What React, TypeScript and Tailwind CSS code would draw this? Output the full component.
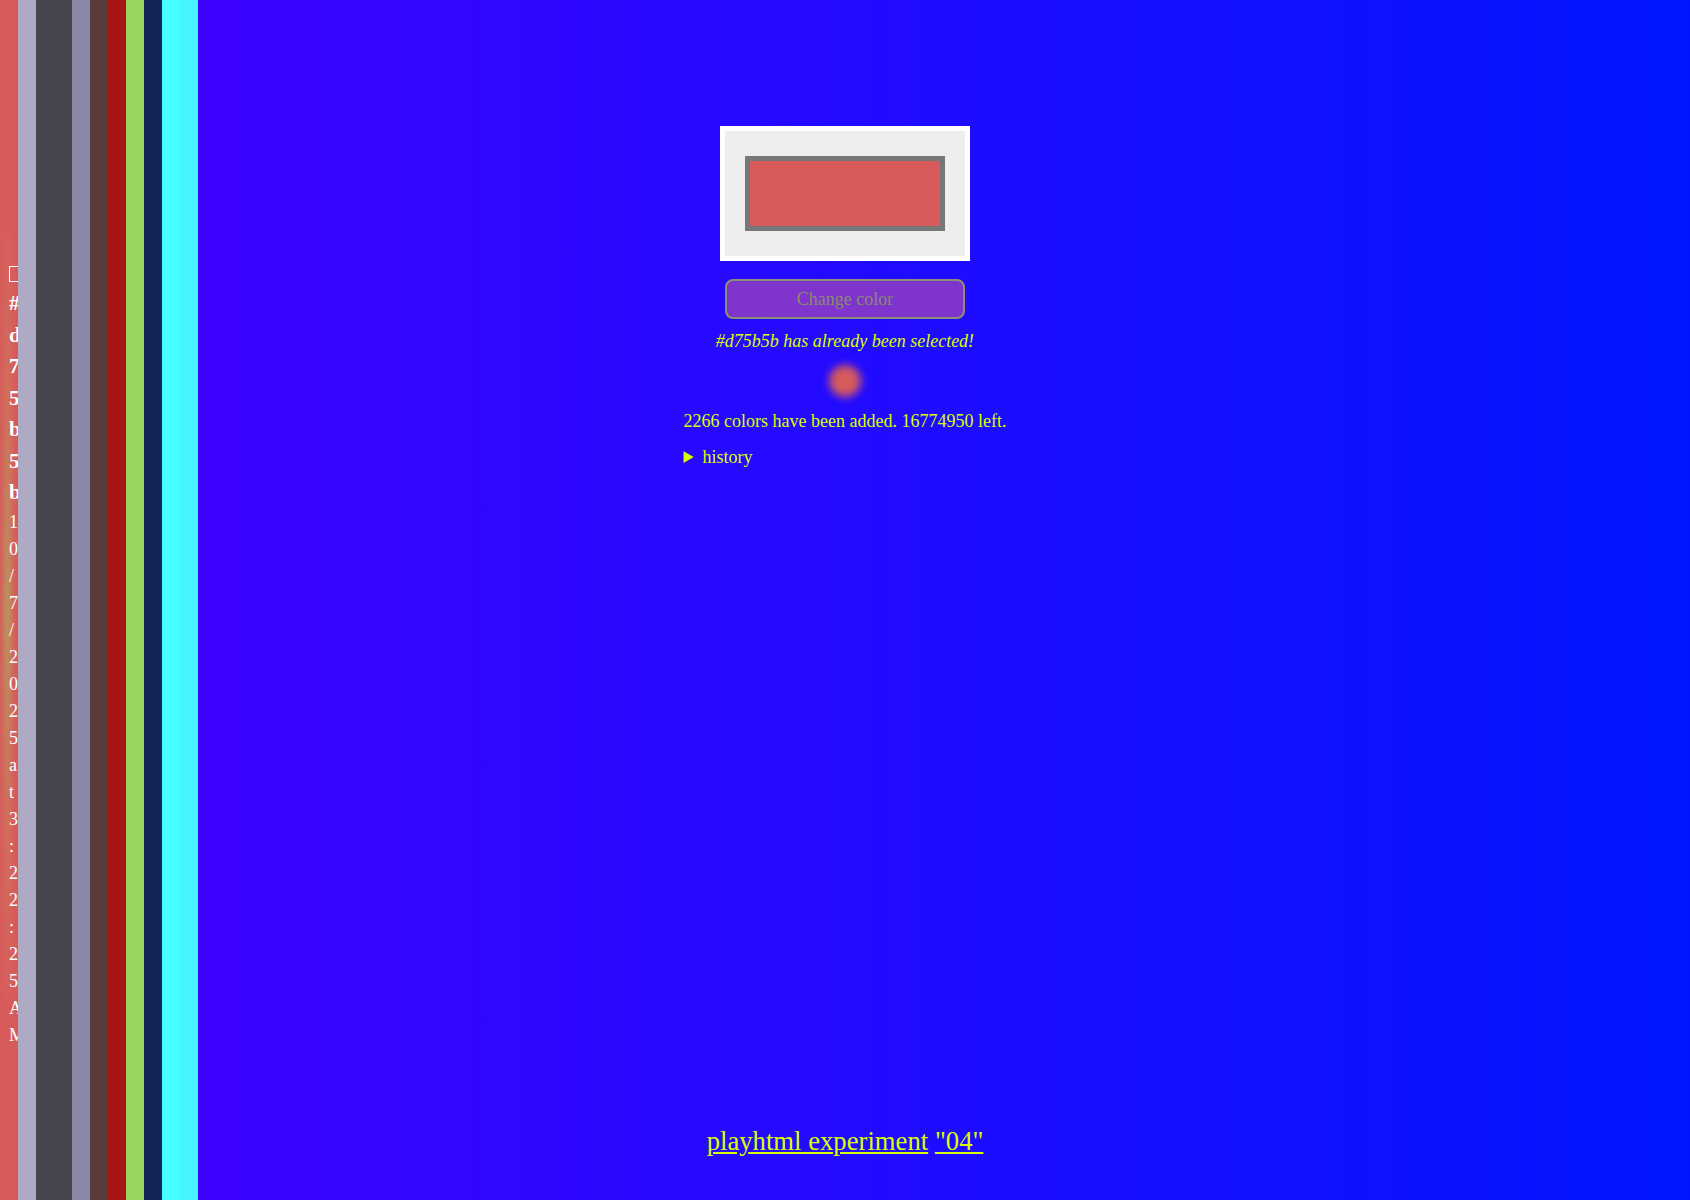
import React from "react";

const stripes = [
  "#d75b5b",
  "#afaac4",
  "#47464f",
  "#47464f",
  "#8888a6",
  "#5a3b3c",
  "#a81414",
  "#99d561",
  "#132354",
  "#44ffff",
  "#44f4ff",
];

const stripeBg: Record<string, string> = {
  "#d75b5b": "bg-[#d75b5b]",
  "#afaac4": "bg-[#afaac4]",
  "#47464f": "bg-[#47464f]",
  "#8888a6": "bg-[#8888a6]",
  "#5a3b3c": "bg-[#5a3b3c]",
  "#a81414": "bg-[#a81414]",
  "#99d561": "bg-[#99d561]",
  "#132354": "bg-[#132354]",
  "#44ffff": "bg-[#44ffff]",
  "#44f4ff": "bg-[#44f4ff]",
};

// the sidebar column is one character wide, so every glyph sits on its own line
function Chars({ text, className }: { text: string; className: string }) {
  return (
    <>
      {text
        .split("")
        .filter((ch) => ch !== " ")
        .map((ch, i) => (
          <div key={i} className={className}>
            {ch}
          </div>
        ))}
    </>
  );
}

export default function App() {
  return (
    <div className="relative h-[1200px] w-full overflow-hidden bg-[linear-gradient(to_right,#4400ff,#0015ff)] font-['Liberation_Serif',serif] text-[#d8ff00]">
      {/* colour history strip */}
      <div className="absolute left-0 top-0 flex h-full">
        {stripes.map((c, i) => (
          <div key={i} className={`relative h-full w-[18px] overflow-hidden ${stripeBg[c]}`}>
            {i === 0 && (
              <>
                <div className="absolute left-[5px] top-[190px] h-[840px] w-[5px] bg-[linear-gradient(to_bottom,transparent,#c9875a_25%,#99d561_50%,#c9875a_75%,transparent)] opacity-80 blur-[3px]" />
                <div className="relative flex flex-col pl-[9px] pt-[266px] text-white">
                  <div className="h-4 w-4 shrink-0 border border-white" />
                  <div className="mt-[6px] flex flex-col">
                    <Chars text="#d75b5b" className="whitespace-nowrap text-[21px] font-bold leading-[31.5px]" />
                    <Chars text="10/7/2025 at 3:22:25 AM" className="whitespace-nowrap text-[18px] leading-[27px]" />
                  </div>
                </div>
              </>
            )}
          </div>
        ))}
      </div>

      {/* main */}
      <div className="flex h-full flex-col items-center">
        <div className="mt-[126px] border-[5px] border-white bg-[#eeeeee] px-[20px] py-[25px]">
          <div className="h-[75px] w-[200px] border-[5px] border-[#777777] bg-[#d75b5b]" />
        </div>

        <button
          disabled
          className="mt-[18px] h-[40px] w-[240px] rounded-lg border-2 border-[#8e8e70] bg-[#7f35cc] text-[18px] text-[#8a8a6e]"
        >
          Change color
        </button>

        <p className="mt-[10px] text-[18px] italic leading-[24px]">
          #d75b5b has already been selected!
        </p>

        <div className="mt-[12px] h-[32px] w-[32px] rounded-full bg-[#d75b5b] blur-[4px]" />

        <div className="mt-[12px] w-fit text-[18px] leading-[24px]">
          <p>2266 colors have been added. 16774950 left.</p>
          <details className="mt-[12px]">
            <summary className="cursor-pointer">history</summary>
          </details>
        </div>

        <footer className="mt-auto pb-[43px] text-[26.7px] leading-[31px]">
          <a href="#" className="underline">
            playhtml experiment
          </a>{" "}
          <a href="#" className="underline">
            "04"
          </a>
        </footer>
      </div>
    </div>
  );
}
